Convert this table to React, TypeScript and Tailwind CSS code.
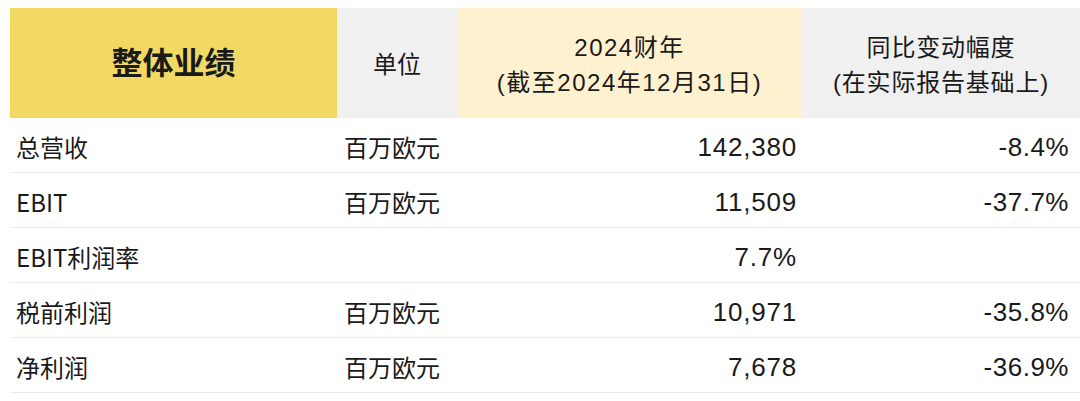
import React from "react";

const rows = [
  ["总营收", "百万欧元", "142,380", "-8.4%"],
  ["EBIT", "百万欧元", "11,509", "-37.7%"],
  ["EBIT利润率", "", "7.7%", ""],
  ["税前利润", "百万欧元", "10,971", "-35.8%"],
  ["净利润", "百万欧元", "7,678", "-36.9%"],
];

const num = { fontFamily: '"Liberation Sans", "Noto Sans CJK SC", sans-serif' };

const App = () => {
  return (
    <div
      className="h-[401px] w-[1080px] overflow-hidden bg-white pl-[10px] pt-[8px] text-[#1a1a1a]"
      style={{ fontFamily: '"Liberation Sans", "Noto Sans CJK SC", sans-serif' }}
    >
      <div className="grid h-[110px] grid-cols-[327px_120px_345px_1fr]">
        <div className="flex items-center justify-center bg-[#f2d964] pt-[3px] text-[31px] font-bold">
          整体业绩
        </div>
        <div className="flex items-center justify-center bg-[#f0f0f0] pt-[3px] text-[24px]">
          单位
        </div>
        <div className="flex flex-col items-center justify-center bg-[#fdf1cf] pt-[4px] text-[24px] leading-[35px] tracking-[1.5px]">
          <span>2024财年</span>
          <span>(截至2024年12月31日)</span>
        </div>
        <div className="flex flex-col items-center justify-center bg-[#f0f0f0] pt-[4px] text-[24px] leading-[35px] tracking-[0.8px]">
          <span>同比变动幅度</span>
          <span>(在实际报告基础上)</span>
        </div>
      </div>
      {rows.map((r, i) => (
        <div
          key={i}
          className="grid h-[55px] grid-cols-[327px_120px_345px_1fr] items-center border-b border-[#ececec] pt-[4px]"
        >
          <div
            className="pl-[6px] text-[24px]"
            style={{ fontFamily: '"Noto Sans CJK SC", sans-serif' }}
          >
            {r[0]}
          </div>
          <div
            className="pl-[7px] text-[24px]"
            style={{ fontFamily: '"Noto Sans CJK SC", sans-serif' }}
          >
            {r[1]}
          </div>
          <div className="pr-[5px] text-right text-[26px] tracking-[0.8px]" style={num}>
            {r[2]}
          </div>
          <div className="pr-[11px] text-right text-[26px] tracking-[0.5px]" style={num}>
            {r[3]}
          </div>
        </div>
      ))}
    </div>
  );
};

export default App;
